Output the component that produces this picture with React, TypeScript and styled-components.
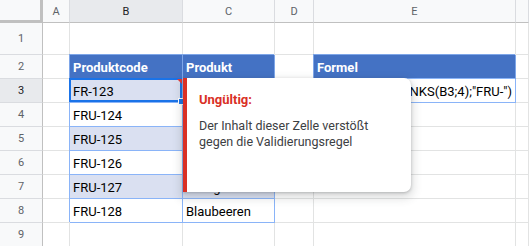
import styled, { createGlobalStyle, css } from "styled-components";

type Tone = "none" | "head" | "band" | "white";

const GlobalStyle = createGlobalStyle`
    html, body {
        margin: 0;
        padding: 0;
        background: #fff;
        overflow: hidden;
    }
`;

const Sheet = styled.div`
    position: relative;
    display: grid;
    grid-template-columns: 43px 27px 113px 92px 39px 202px 1fr;
    grid-template-rows: 23px 32px repeat(8, 24px);
    width: 529px;
    height: 246px;
    font-family: Roboto, "Liberation Sans", sans-serif;
`;

const Corner = styled.div`
    background: #f8f9fa;
    border-right: 3px solid #c0c0c0;
    border-bottom: 3px solid #c0c0c0;
`;

const ColHeader = styled.div<{ $active?: boolean }>`
    display: flex;
    align-items: center;
    justify-content: center;
    font-size: 11px;
    color: ${({ $active }) => ($active ? "#202124" : "#5f6368")};
    background: ${({ $active }) => ($active ? "#e8eaed" : "#f8f9fa")};
    border-right: 1px solid #dadce0;
    border-bottom: 1px solid #c0c0c0;
`;

const RowHeader = styled.div<{ $active?: boolean }>`
    display: flex;
    align-items: center;
    justify-content: center;
    font-size: 11px;
    color: ${({ $active }) => ($active ? "#202124" : "#5f6368")};
    background: ${({ $active }) => ($active ? "#e8eaed" : "#f8f9fa")};
    border-right: 1px solid #c0c0c0;
    border-bottom: 1px solid #dadce0;
`;

const tones = {
    none: css``,
    head: css`
        background: #4472c4;
        color: #fff;
        font-weight: 700;
        border-color: #7ea6e8;
        box-shadow: -1px -1px 0 #7ea6e8;
    `,
    band: css`
        background: #dae0f1;
        border-color: #8ab4f8;
        box-shadow: -1px -1px 0 #8ab4f8;
    `,
    white: css`
        background: #fff;
        border-color: #8ab4f8;
        box-shadow: -1px -1px 0 #8ab4f8;
    `,
};

const Cell = styled.div<{ $tone?: Tone; $right?: boolean; $selected?: boolean }>`
    position: relative;
    display: flex;
    align-items: center;
    justify-content: ${({ $right }) => ($right ? "flex-end" : "flex-start")};
    padding: 1px 3px 0;
    white-space: nowrap;
    font-size: 13px;
    color: #000;
    background: #fff;
    border-right: 1px solid #e2e3e3;
    border-bottom: 1px solid #e2e3e3;
    ${({ $tone = "none" }) => tones[$tone]}

    ${({ $selected }) =>
        $selected &&
        css`
            &::after {
                content: "";
                position: absolute;
                inset: -1px 0 0 -1px;
                border: 2px solid #1a73e8;
            }
            &::before {
                content: "";
                position: absolute;
                top: 0;
                right: 0;
                border-top: 5px solid #e53935;
                border-left: 5px solid transparent;
                z-index: 1;
            }
        `}
`;

const Handle = styled.span`
    position: absolute;
    right: -3px;
    bottom: -3px;
    width: 5px;
    height: 5px;
    background: #1a73e8;
    border: 1px solid #fff;
    z-index: 2;
`;

const Popup = styled.div`
    position: absolute;
    left: 183px;
    top: 78px;
    width: 228px;
    height: 114px;
    box-sizing: border-box;
    padding: 14px 14px 0 12px;
    background: #fff;
    border-left: 4px solid #d93025;
    border-radius: 0 7px 7px 0;
    box-shadow: 0 1px 3px rgba(60, 64, 67, 0.3), 0 4px 8px 3px rgba(60, 64, 67, 0.15);
    z-index: 5;
`;

const PopupTitle = styled.div`
    font-size: 13px;
    font-weight: 700;
    color: #d93025;
    line-height: 16px;
    margin-bottom: 10px;
`;

const PopupText = styled.div`
    font-size: 12.5px;
    color: #3c4043;
    line-height: 16px;
`;

const cols = ["A", "B", "C", "D", "E", ""];

const products: [string, string][] = [
    ["FR-123", "Äpfel"],
    ["FRU-124", "Bananen"],
    ["FRU-125", "Kirschen"],
    ["FRU-126", "Trauben"],
    ["FRU-127", "Orangen"],
    ["FRU-128", "Blaubeeren"],
];

const App = () => {
    return (
        <Sheet>
            <GlobalStyle />
            <Corner />
            {cols.map((c, i) => (
                <ColHeader key={i} $active={c === "B"}>{c}</ColHeader>
            ))}

            <RowHeader>1</RowHeader>
            {cols.map((_, i) => <Cell key={i} />)}

            <RowHeader>2</RowHeader>
            <Cell />
            <Cell $tone="head">Produktcode</Cell>
            <Cell $tone="head">Produkt</Cell>
            <Cell />
            <Cell $tone="head">Formel</Cell>
            <Cell />

            {products.map(([code, name], i) => {
                const tone: Tone = i % 2 === 0 ? "band" : "white";
                const first = i === 0;
                return [
                    <RowHeader key={`h${i}`} $active={first}>{i + 3}</RowHeader>,
                    <Cell key={`a${i}`} />,
                    <Cell key={`b${i}`} $tone={tone} $selected={first}>
                        {code}
                        {first && <Handle />}
                    </Cell>,
                    <Cell key={`c${i}`} $tone={tone}>{name}</Cell>,
                    <Cell key={`d${i}`} />,
                    first ? (
                        <Cell key={`e${i}`} $tone="white" $right>
                            =IDENTISCH(LINKS(B3;4);"FRU-")
                        </Cell>
                    ) : (
                        <Cell key={`e${i}`} />
                    ),
                    <Cell key={`f${i}`} />,
                ];
            })}

            <RowHeader>9</RowHeader>
            {cols.map((_, i) => <Cell key={i} />)}

            <Popup>
                <PopupTitle>Ungültig:</PopupTitle>
                <PopupText>
                    Der Inhalt dieser Zelle verstößt
                    <br />
                    gegen die Validierungsregel
                </PopupText>
            </Popup>
        </Sheet>
    );
};

export default App;
